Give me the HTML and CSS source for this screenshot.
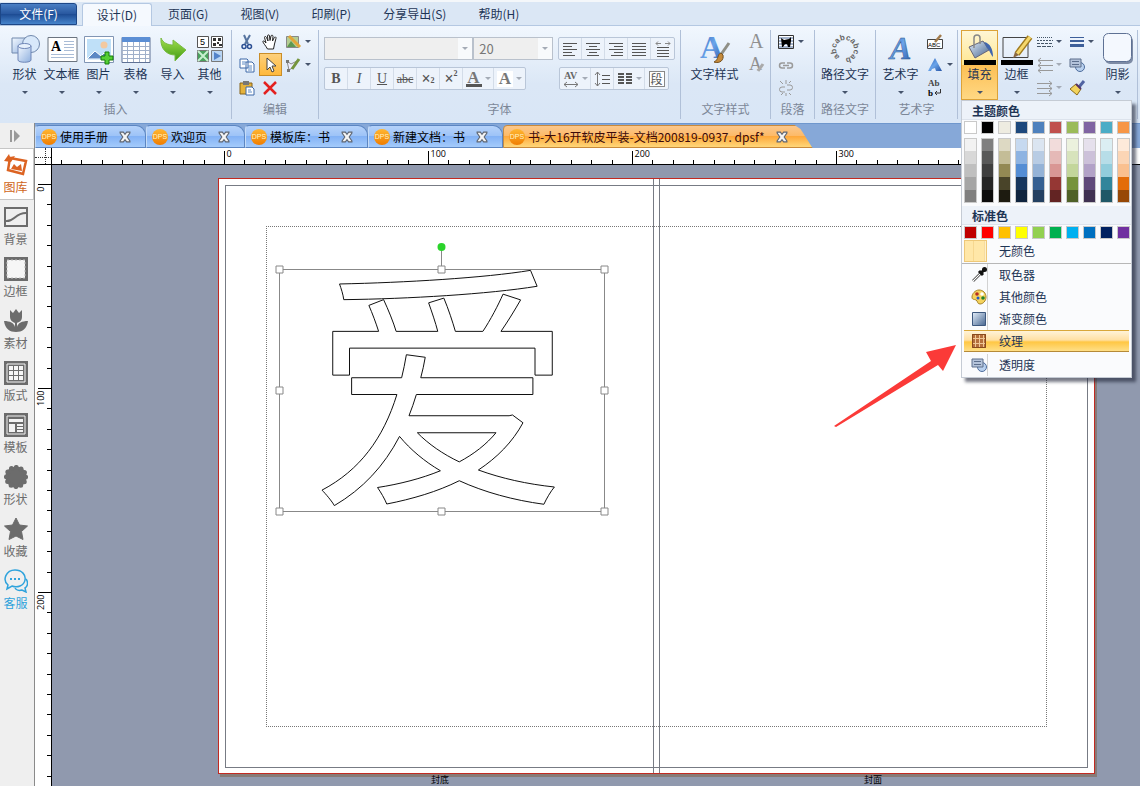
FILE: index.html
```html
<!DOCTYPE html>
<html lang="zh-CN">
<head>
    <meta charset="UTF-8">
    <meta name="viewport" content="width=device-width, initial-scale=1.0">
    <title>书-大16开软皮平装</title>
    <link rel="stylesheet" href="styles.css">
</head>
<body>
    <svg class="defs" aria-hidden="true">
        <defs>
            <linearGradient id="gBlue" x1="0" y1="0" x2="1" y2="1"><stop offset="0" stop-color="#f2f8ff"/><stop offset="1" stop-color="#8fb0de"/></linearGradient>
            <linearGradient id="gLetter" x1="0" y1="0" x2="1" y2="1"><stop offset="0" stop-color="#2a5db5"/><stop offset=".5" stop-color="#6ba5ea"/><stop offset="1" stop-color="#2553a5"/></linearGradient>
            <linearGradient id="gGreen" x1="0" y1="0" x2="0" y2="1"><stop offset="0" stop-color="#a4e04c"/><stop offset="1" stop-color="#3f9a14"/></linearGradient>
            <linearGradient id="gOrange" x1="0" y1="0" x2="0" y2="1"><stop offset="0" stop-color="#ffb733"/><stop offset="1" stop-color="#f07d00"/></linearGradient>
            <linearGradient id="gDark" x1="0" y1="0" x2="1" y2="1"><stop offset="0" stop-color="#e4effb"/><stop offset="1" stop-color="#46658f"/></linearGradient>
            <symbol id="dps" viewBox="0 0 16 16"><circle cx="8" cy="8" r="8" fill="url(#gOrange)"/><text x="8" y="10" text-anchor="middle" font-size="7" fill="#fff4c8" font-family="Liberation Sans">DPS</text></symbol>
            <symbol id="close" viewBox="0 0 11 11"><path d="M1 1h3l1.500 2L7 1h3v1L7.500 5.500 10 9v1H7L5.500 8 4 10H1V9l2.500-3.500L1 2z" fill="#f4f4f4" stroke="#5d6470"/></symbol>
            <symbol id="trans" viewBox="0 0 16 16"><circle cx="11" cy="10" r="4.500" fill="#b8d0ee" stroke="#4d6c9c"/><path d="M1 2h11v8H1z" fill="#b4c3da" stroke="#5c6e8c"/><path d="M3 4.500h7M3 7.500h7" stroke="#5c6e8c"/></symbol>
        </defs>
    </svg>

    <nav class="menubar">
        <button class="menu-file">文件(F)</button>
        <button class="menu-item active">设计(D)</button>
        <button class="menu-item">页面(G)</button>
        <button class="menu-item">视图(V)</button>
        <button class="menu-item">印刷(P)</button>
        <button class="menu-item">分享导出(S)</button>
        <button class="menu-item">帮助(H)</button>
    </nav>

    <header class="ribbon">
        <!-- 插入 -->
        <section class="group g-insert">
            <div class="group-body">
                <button class="big"><svg viewBox="0 0 32 32"><path d="M3 5h16v15H3z" fill="url(#gBlue)" stroke="#7189ad"/><circle cx="22" cy="11" r="8.500" fill="#d8e8fa" stroke="#7189ad"/><path d="M9 13v14c0 3 13 3 13 0V13z" fill="url(#gBlue)" stroke="#7087b8"/><ellipse cx="15.500" cy="13" rx="6.500" ry="2.500" fill="#e6f0fc" stroke="#7087b8"/></svg><span>形状</span><i class="caret"></i></button>
                <button class="big"><svg viewBox="0 0 32 32"><path d="M2 4.500h29v24H2z" fill="#fff" stroke="#6b7480"/><text x="5" y="18" font-size="14" font-weight="bold" font-family="Liberation Serif">A</text><path d="M18 8.500h10M18 11.500h10M18 14.500h10M18 17.500h10M5 21.500h23M5 24.500h23" stroke="#a9bcd6"/></svg><span>文本框</span><i class="caret"></i></button>
                <button class="big"><svg viewBox="0 0 32 32"><path d="M1.500 3.500h29v26h-29z" fill="#fff" stroke="#8195b4"/><path d="M4 6h24v21H4z" fill="#bfe0f8"/><circle cx="21" cy="12" r="3.500" fill="#f3c9a0"/><path d="M4 26l8-8 6 5 3-3 7 6z" fill="#5b88c4" stroke="#fff"/><path d="M22 19h4v4h4v4h-4v4h-4v-4h-4v-4h4z" fill="#55cf34" stroke="#177d0b"/></svg><span>图片</span><i class="caret"></i></button>
                <button class="big"><svg viewBox="0 0 32 32"><path d="M2 4.500h28v25H2z" fill="#fff" stroke="#5f7194"/><path d="M2 4h28v5H2z" fill="#5b8ed4"/><path d="M2 13.500h28M2 17.500h28M2 21.500h28M2 25.500h28M7.500 9v20M13.500 9v20M19.500 9v20M25.500 9v20" stroke="#a0b0ca"/></svg><span>表格</span><i class="caret"></i></button>
                <button class="big"><svg viewBox="0 0 32 32"><path d="M4 5c2 5 7 7 12 7V7l13 10-11 11v-6C10 22 3 16 4 5z" fill="url(#gGreen)" stroke="#79bb45"/></svg><span>导入</span><i class="caret"></i></button>
                <button class="big"><svg viewBox="0 0 32 32"><path d="M3.500 3.500h11v11h-11z" fill="#fff" stroke="#555"/><text x="6" y="12" font-size="9" font-family="Liberation Sans">5</text><path d="M17.500 3.500h11v11h-11z" fill="#fff" stroke="#555"/><path d="M19 5h3v3h-3zM24 5h3v3h-3zM19 10h3v3h-3zM23 9h2v2h-2zM25 11h3v2h-3z" fill="#333"/><path d="M3.500 17.500h11v11h-11z" fill="#4aa15d" stroke="#777"/><path d="M4 18l10 10M14 18L4 28" stroke="#c7efcf" stroke-width="2"/><path d="M17.500 17.500h11v11h-11z" fill="#b9d5f3" stroke="#777"/><path d="M20 19l7 4-7 4z" fill="#5383c9"/></svg><span>其他</span><i class="caret"></i></button>
            </div>
            <h2>插入</h2>
        </section>

        <!-- 编辑 -->
        <section class="group g-edit">
            <div class="group-body edit-grid">
                <button class="small" aria-label="剪切"><svg viewBox="0 0 16 16"><path d="M5 1l4 9M11 1L6 10" stroke="#56749f" stroke-width="2" fill="none"/><circle cx="5" cy="12.500" r="2" fill="none" stroke="#2b4f93" stroke-width="1.500"/><circle cx="10.500" cy="12.500" r="2" fill="none" stroke="#2b4f93" stroke-width="1.500"/></svg></button>
                <button class="small" aria-label="抓手"><svg viewBox="0 0 16 16"><path d="M5.500 15C4 12 1 9 .8 7.500 1 6.500 2.500 7 4 9L2.500 3.500c0-1.500 1.700-1 2 0L6 7l-.5-5c0-1.500 2-1.500 2 0L8 6.500 9 2c.3-1.300 2-1 2 .3L10.500 7l1.800-3.500c.7-1 2.200-.4 1.700.8L12.500 10 11.500 15z" fill="#fff" stroke="#222"/></svg></button>
                <button class="small" aria-label="裁剪"><svg viewBox="0 0 16 16"><path d="M1.500 2.500h12v11h-12z" fill="#b5cd93" stroke="#888"/><path d="M2 13l4-6 5 6z" fill="#5e9850"/><path d="M4 2l11 11" stroke="#e2a537" stroke-width="3"/></svg><i class="caret"></i></button>
                <button class="small" aria-label="复制"><svg viewBox="0 0 16 16"><path d="M1 2h7l1 1v8H1zM7 5h6l2 2v8H7z" fill="#fff" stroke="#3d69a8"/><path d="M3 5h4M3 7h3M9 9h4M9 11h4M9 13h4" stroke="#5f8cc6"/></svg></button>
                <button class="small pressed" aria-label="选择"><svg viewBox="0 0 16 16"><path d="M5 1v12l3-3 2 5 2-1-2-5h4z" fill="#fff" stroke="#444"/></svg></button>
                <button class="small" aria-label="节点"><svg viewBox="0 0 16 16"><path d="M2 4l2 9 5-3 5-7-8 4z" fill="#eef" stroke="#888"/><path d="M1 3h3v3H1zM2 12h3v3H2z" fill="#777"/><path d="M14 2L7 12" stroke="#75953d" stroke-width="3"/></svg><i class="caret"></i></button>
                <button class="small" aria-label="粘贴"><svg viewBox="0 0 16 16"><path d="M1 3h12v11H1z" fill="#e5b23b" stroke="#86621b"/><path d="M4 1h6v4H4z" fill="#777"/><path d="M7 7h6l2 2v6H7z" fill="#fff" stroke="#3d69a8"/><path d="M9 10h3M9 12h4" stroke="#5f8cc6"/></svg></button>
                <button class="small" aria-label="删除"><svg viewBox="0 0 16 16"><path d="M2 2l12 12M14 2L2 14" stroke="#e3201f" stroke-width="2.500"/></svg></button>
            </div>
            <h2>编辑</h2>
        </section>

        <!-- 字体 -->
        <section class="group g-font">
            <div class="group-body font-rows">
                <div class="font-row">
                    <span class="combo combo-font"><select aria-label="字体" disabled><option></option></select></span>
                    <span class="combo combo-size"><select aria-label="字号" disabled><option>20</option></select></span>
                    <div class="toolset push">
                        <button aria-label="左对齐"><svg viewBox="0 0 16 16"><path d="M1 2.500h14M1 5.500h9M1 8.500h14M1 11.500h9M1 14.500h12" stroke="#555"/></svg></button>
                        <button aria-label="居中"><svg viewBox="0 0 16 16"><path d="M1 2.500h14M4 5.500h8M1 8.500h14M4 11.500h8M2 14.500h12" stroke="#555"/></svg></button>
                        <button aria-label="右对齐"><svg viewBox="0 0 16 16"><path d="M1 2.500h14M6 5.500h9M1 8.500h14M6 11.500h9M3 14.500h12" stroke="#555"/></svg></button>
                        <button aria-label="两端对齐"><svg viewBox="0 0 16 16"><path d="M1 2.500h14M1 5.500h14M1 8.500h14M1 11.500h14M1 14.500h14" stroke="#555"/></svg></button>
                        <button aria-label="分散对齐"><svg viewBox="0 0 16 16"><path d="M2 6.500h12M2 9.500h12M2 12.500h12M2 15.500h12" stroke="#555"/><path d="M1 2.500h5M3 .5l-2 2 2 2M10 2.500h5M13 .5l2 2-2 2" stroke="#888" fill="none"/></svg></button>
                    </div>
                </div>
                <div class="font-row">
                    <div class="toolset fmt">
                        <button><b>B</b></button>
                        <button><em>I</em></button>
                        <button><u>U</u></button>
                        <button><s>abc</s></button>
                        <button class="script">×<small class="low">2</small></button>
                        <button class="script">×<small>2</small></button>
                        <button class="with-caret"><span class="fore">A</span><i class="caret dim"></i></button>
                        <button class="with-caret"><span class="back">A</span><i class="caret dim"></i></button>
                    </div>
                    <div class="toolset push2">
                        <button class="with-caret" aria-label="字距"><svg viewBox="0 0 16 16"><text x="1" y="8" font-size="10" font-weight="bold" fill="#666" font-family="Liberation Serif">AV</text><path d="M1 13.500h14M4 11l-3 2.500 3 2.500M12 11l3 2.500-3 2.500" stroke="#777" fill="none"/></svg><i class="caret dim"></i></button>
                        <button aria-label="行距"><svg viewBox="0 0 16 16"><path d="M3.500 1v14M1 4l2.500-3L6 4M1 12l2.500 3L6 12" stroke="#777" fill="none"/><path d="M8 4.500h8M8 8.500h8M8 12.500h8" stroke="#555"/></svg></button>
                        <button class="with-caret" aria-label="分栏"><svg viewBox="0 0 16 16"><path d="M1 3h6M1 6h6M1 9h6M1 12h6M9 3h6M9 6h6M9 9h6M9 12h6" stroke="#555" stroke-width="2"/></svg><i class="caret dim"></i></button>
                        <button><span class="para">段</span></button>
                    </div>
                </div>
            </div>
            <h2>字体</h2>
        </section>

        <section class="group g-style">
            <div class="group-body">
                <button class="big"><svg viewBox="0 0 32 32"><text x="1" y="25" font-size="32" font-weight="bold" fill="url(#gLetter)" font-family="Liberation Serif">A</text><path d="M30 10L21 23" stroke="#8f8f86" stroke-width="3"/><path d="M22 20c-4 1-2 7-7 9 6 2 10-2 9-7z" fill="#c58a3a" stroke="#77521f"/></svg><span>文字样式</span></button>
                <div class="stack">
                    <button class="small"><svg viewBox="0 0 16 16"><text x="1" y="14" font-size="20" fill="#909090" font-family="Liberation Serif">A</text></svg></button>
                    <button class="small"><svg viewBox="0 0 16 16"><text x="1" y="13" font-size="18" fill="#909090" font-family="Liberation Serif">A</text><path d="M15 7l-5 7" stroke="#aaa" stroke-width="3"/></svg></button>
                </div>
            </div>
            <h2>文字样式</h2>
        </section>

        <section class="group g-para">
            <div class="group-body stack">
                <button class="small" aria-label="环绕"><svg viewBox="0 0 16 16"><path d="M.5 1.500h15v13H.5z" fill="#fff" stroke="#333"/><path d="M1 4h14M1 7h14M1 10h14M1 13h14" stroke="#4b6b9c"/><path d="M3 4l3 2 5-1 2-2v4l-1 6h-2l-1-3H7l-2 3H4z"/></svg><i class="caret"></i></button>
                <button class="small" aria-label="链接"><svg viewBox="0 0 16 16"><path d="M7 6H4a2.500 2.500 0 000 5h3M9 6h3a2.500 2.500 0 010 5H9M5 8.500h6" stroke="#9a9a9a" stroke-width="1.500" fill="none"/></svg></button>
                <button class="small" aria-label="取消链接"><svg viewBox="0 0 16 16"><path d="M7 7H4a2.500 2.500 0 000 5h3M9 5h3a2.500 2.500 0 010 5H9M2 1l3 3M8 0v4M13 1l-2 2M3 15l2-2M8 16v-3M13 15l-2-2" stroke="#9a9a9a" fill="none"/></svg></button>
            </div>
            <h2>段落</h2>
        </section>

        <section class="group g-path">
            <div class="group-body">
                <button class="big"><svg viewBox="0 0 32 32"><path id="ring" d="M11 23.500A9 9 0 1 1 21 23.500A9 9 0 0 1 11 23.500" fill="none"/><text font-size="8" font-weight="bold" fill="#666" font-family="Liberation Sans"><textPath href="#ring">abcabcabcab</textPath></text></svg><span>路径文字</span><i class="caret"></i></button>
            </div>
            <h2>路径文字</h2>
        </section>

        <section class="group g-art">
            <div class="group-body">
                <button class="big"><svg viewBox="0 0 32 32"><text x="5" y="26" font-size="32" font-style="italic" font-weight="bold" fill="url(#gLetter)" stroke="#2c5487" stroke-width=".5" font-family="Liberation Serif">A</text></svg><span>艺术字</span><i class="caret"></i></button>
                <div class="stack">
                    <button class="small"><svg viewBox="0 0 16 16"><path d="M.5 5.500h15v9H.5z" fill="#fff" stroke="#444"/><text x="1" y="13" font-size="6" font-family="Liberation Sans">ABC</text><path d="M14 1L8 8" stroke="#a27b4c" stroke-width="2.500"/></svg></button>
                    <button class="small"><svg viewBox="0 0 16 16"><path d="M8 1l7 13H9l-1-3-3 1-1 2H1z" fill="url(#gLetter)"/></svg><i class="caret"></i></button>
                    <button class="small"><svg viewBox="0 0 16 16"><text x="1" y="6" font-size="9" fill="#444" font-family="Liberation Serif" font-weight="bold">Ab</text><text x="1" y="16" font-size="9" font-family="Liberation Serif" font-weight="bold">b</text><path d="M13.500 9v4H8M10 11l-2 2 2 2" stroke="#333" fill="none"/></svg></button>
                </div>
            </div>
            <h2>艺术字</h2>
        </section>

        <section class="group g-fill">
            <div class="group-body">
                <div class="dropdown">
                    <button class="big open" aria-expanded="true"><svg viewBox="0 0 32 32"><path d="M5 14L19 8l6 9-14 8z" fill="url(#gDark)" stroke="#667"/><path d="M10 15V5c0-4 6-4 6 0v6" fill="none" stroke="#888" stroke-width="1.500"/><path d="M20 9c6 1 9 7 9 15-3-3-3-7-6-9z" fill="#4166ad"/><path d="M0 27h32v5H0z"/></svg><span>填充</span><i class="caret"></i></button>
                    <div class="menu">
                        <h3>主题颜色</h3>
                        <div class="swatches" id="themeColors"></div>
                        <div class="swatches shades" id="themeShades"></div>
                        <h3>标准色</h3>
                        <div class="swatches" id="standardColors"></div>
                        <ul>
                            <li class="rule"><button><span class="gutter nofill"></span>无颜色</button></li>
                            <li><button><span class="gutter"><svg viewBox="0 0 16 16"><path d="M2 14l8-8" stroke="#777" stroke-width="3"/><path d="M2 14l8-8" stroke="#fff"/><path d="M8 4l4 4M10 6l3-3" stroke="#111" stroke-width="3"/><circle cx="13.500" cy="2.500" r="2.500" fill="#111"/></svg></span>取色器</button></li>
                            <li><button><span class="gutter"><svg viewBox="0 0 16 16"><path d="M8 1c4 0 7 3 7 7s-3 7-6 7-2-3-4-4-4 0-4-3 3-7 7-7z" fill="#f5d35d" stroke="#a68328"/><circle cx="6" cy="5" r="1.800" fill="#b62e20"/><circle cx="11" cy="5" r="1.800" fill="#fff"/><circle cx="12" cy="9" r="1.800" fill="#21812c"/><circle cx="7" cy="9" r="1.500" fill="#235bc2"/></svg></span>其他颜色</button></li>
                            <li><button><span class="gutter"><svg viewBox="0 0 16 16"><path d="M1.500 1.500h13v13h-13z" fill="url(#gDark)" stroke="#3d587e"/></svg></span>渐变颜色</button></li>
                            <li class="hot"><button><span class="gutter"><svg viewBox="0 0 16 16"><path d="M1 1h14v14H1z" fill="#b56f3c"/><path d="M4.500 1v14M8.500 1v14M12.500 1v14M1 5.500h14M1 10.500h14" stroke="#efc796"/><path d="M1.500 1.500h13v13h-13z" fill="none" stroke="#87491f"/></svg></span>纹理</button></li>
                            <li class="last"><button><span class="gutter"><svg><use href="#trans"/></svg></span>透明度</button></li>
                        </ul>
                    </div>
                </div>
                <button class="big"><svg viewBox="0 0 32 32"><path d="M2 4.500h25v20H2z" fill="none" stroke="#444"/><path d="M29 4L16 21" stroke="#a17b1e" stroke-width="6"/><path d="M29 4L16 21" stroke="#f5d76b" stroke-width="3"/><path d="M18 22l-6 3 2-6z" fill="#8b6a43"/><path d="M0 27h32v5H0z"/></svg><span>边框</span><i class="caret"></i></button>
                <div class="stack">
                    <button class="small"><svg viewBox="0 0 16 16"><path d="M0 3.500h16" stroke="#456" stroke-dasharray="1 1"/><path d="M0 6.500h16" stroke="#456" stroke-dasharray="2 1"/><path d="M0 9.500h16" stroke="#456" stroke-dasharray="3 1"/><path d="M0 12.500h16" stroke="#456" stroke-dasharray="4 1"/></svg><i class="caret"></i></button>
                    <button class="small"><svg viewBox="0 0 16 16"><path d="M1 3.500h15M1 8.500h15M1 13.500h15M4 1L1 3.500 4 6M4 6L1 8.500 4 11M4 11l-3 2.500L4 16" stroke="#999" fill="none"/></svg><i class="caret dim"></i></button>
                    <button class="small"><svg viewBox="0 0 16 16"><path d="M0 3.500h15M0 8.500h15M0 13.500h15M12 1l3 2.500L12 6M12 6l3 2.500-3 2.500M12 11l3 2.500-3 2.500" stroke="#999" fill="none"/></svg><i class="caret dim"></i></button>
                </div>
                <div class="stack">
                    <button class="small"><svg viewBox="0 0 16 16"><path d="M1 3.500h14" stroke="#3d5f9a"/><path d="M1 7h14" stroke="#3d5f9a" stroke-width="2"/><path d="M1 11.500h14" stroke="#3d5f9a" stroke-width="3"/></svg><i class="caret"></i></button>
                    <button class="small"><svg><use href="#trans"/></svg></button>
                    <button class="small"><svg viewBox="0 0 16 16"><path d="M15 1l-5 6" stroke="#5163a1" stroke-width="3"/><path d="M7 4l5 5-4 6-7-6z" fill="#f2d35c" stroke="#8b6b18"/><path d="M7 4l5 5" stroke="#536" stroke-width="2"/></svg></button>
                </div>
                <button class="big"><svg viewBox="0 0 32 32"><rect x="3" y="3" width="28" height="28" rx="5" fill="#7d8ba5"/><rect x="1.500" y=".5" width="28" height="28" rx="5" fill="#f4f8fe" stroke="#5e7194"/></svg><span>阴影</span><i class="caret"></i></button>
            </div>
            <h2></h2>
        </section>
    </header>

    <main class="workspace">
        <aside class="sidebar">
            <button class="collapse" aria-label="展开"><svg viewBox="0 0 12 14"><path d="M1 1h2v12H1zM5 1l6 6-6 6z" fill="#999"/></svg></button>
            <button class="side-item current"><svg viewBox="0 0 24 24"><path d="M6 5l16 3-3 13-15-4z" fill="none" stroke="#dc6322" stroke-width="2.500"/><path d="M0 8l5-7 1 3 5-1-4 6z" fill="#dc6322"/><path d="M7 16l3-5 3 3 4-3 1 7z" fill="#dc6322"/></svg>图库</button>
            <button class="side-item"><svg viewBox="0 0 24 24"><path d="M1 3h22v18H1z" fill="none" stroke="#6c6c6c" stroke-width="2"/><path d="M2 16c8 1 9-8 20-8" fill="none" stroke="#6c6c6c" stroke-width="2"/></svg>背景</button>
            <button class="side-item"><svg viewBox="0 0 24 24"><path d="M1.500 1.500h21v21h-21z" fill="#f6f6f6" stroke="#6c6c6c" stroke-width="3"/><path d="M3 3h18v18H3z" fill="none" stroke="#bbb" stroke-dasharray="2 2"/></svg>边框</button>
            <button class="side-item"><svg viewBox="0 0 24 24"><path d="M6 1l3 3 3-4 3 4 3-3v7c0 4-3 5-5 6v4c1-4 5-6 11-6-1 8-6 11-12 11S1 20 0 12c6 0 10 2 11 6v-4c-3-1-5-3-5-6z" fill="#6c6c6c"/></svg>素材</button>
            <button class="side-item"><svg viewBox="0 0 24 24"><path d="M1 1h22v22H1z" fill="#6c6c6c" stroke="#6c6c6c" stroke-width="2"/><path d="M3 3h18v18H3z" fill="none" stroke="#f6f6f6"/><path d="M5 5h4v4H5zM10 5h4v4h-4zM15 5h4v4h-4zM5 10h4v4H5zM10 10h4v4h-4zM15 10h4v4h-4zM5 15h4v4H5zM10 15h4v4h-4zM15 15h4v4h-4z" fill="#f6f6f6"/></svg>版式</button>
            <button class="side-item"><svg viewBox="0 0 24 24"><path d="M0 0h24v24H0z" fill="#6c6c6c"/><path d="M3 3h18v18H3z" fill="none" stroke="#f3f3f3"/><path d="M5 6h14v3H5zM5 11h6v8H5zM13 11h6v2h-6zM13 14h6v2h-6zM13 17h6v2h-6z" fill="#f3f3f3"/></svg>模板</button>
            <button class="side-item"><svg viewBox="0 0 24 24"><circle cx="12" cy="12" r="10.500" fill="#6c6c6c"/><circle cx="12" cy="12" r="9.549" fill="none" stroke="#6c6c6c" stroke-width="5" stroke-dasharray="0 5" stroke-linecap="round"/></svg>形状</button>
            <button class="side-item"><svg viewBox="0 0 24 24"><path d="M12 1l3.500 7 8 1-6 5.500 1.500 8L12 19l-7 3.500 1.500-8L.5 9l8-1z" fill="#6c6c6c" stroke="#6c6c6c" stroke-linejoin="round"/></svg>收藏</button>
            <button class="side-item service"><svg viewBox="0 0 24 24"><path d="M3 20l1-4C-2 11 2 1 11 1c7 0 11 5 10 10-1 6-8 8-13 6z" fill="none" stroke="#2fa3dc" stroke-width="1.500"/><path d="M22 10c3 4 1 8-1 9l1 4-4-2c-3 1-6 0-7-2" fill="none" stroke="#2fa3dc" stroke-width="1.500"/><path d="M6 9h2v2H6zM10 9h2v2h-2zM14 9h2v2h-2z" fill="#2fa3dc"/></svg>客服</button>
        </aside>

        <div class="editor">
            <div class="tabs">
                <div class="tab"><svg class="logo"><use href="#dps"/></svg>使用手册<button aria-label="关闭"><svg><use href="#close"/></svg></button></div>
                <div class="tab"><svg class="logo"><use href="#dps"/></svg>欢迎页<button aria-label="关闭"><svg><use href="#close"/></svg></button></div>
                <div class="tab"><svg class="logo"><use href="#dps"/></svg>模板库：书<button aria-label="关闭"><svg><use href="#close"/></svg></button></div>
                <div class="tab"><svg class="logo"><use href="#dps"/></svg>新建文档：书<button aria-label="关闭"><svg><use href="#close"/></svg></button></div>
                <div class="tab active"><svg class="logo"><use href="#dps"/></svg>书-大16开软皮平装-文档200819-0937. dpsf*<button aria-label="关闭"><svg><use href="#close"/></svg></button></div>
            </div>
            <div class="ruler-row">
                <div class="corner"></div>
                <svg class="ruler-h" id="rulerH"></svg>
            </div>
            <div class="canvas-row">
                <svg class="ruler-v" id="rulerV"></svg>
                <div class="canvas">
                    <div class="sheet">
                        <div class="trim"></div>
                        <div class="margin"></div>
                        <div class="spine"></div>
                        <!-- 选中的艺术字 -->
                        <svg class="artwork" viewBox="0 0 336 274">
                            <path d="M5.500 27.500h325v242h-325zM167.500 27V6" fill="none" stroke="#888"/>
                            <text class="glyph" x="168" y="245" text-anchor="middle">爱</text>
                            <circle cx="167.500" cy="5" r="4" fill="#2bd42b"/>
                            <path d="M2 24h7v7H2zM164 24h7v7h-7zM327 24h7v7h-7zM2 145h7v7H2zM327 145h7v7h-7zM2 266h7v7H2zM164 266h7v7h-7zM327 266h7v7h-7z" fill="#fff" stroke="#888"/>
                        </svg>
                        <span class="cover back-cover">封底</span>
                        <span class="cover front-cover">封面</span>
                    </div>
                    <svg class="pointer" viewBox="0 0 124 84"><path d="M0 82L97 17 92 8 122 1 109 27 104 21 2 83z" fill="#fb3a38"/></svg>
                </div>
            </div>
        </div>
    </main>

    <script src="script.js"></script>
</body>
</html>
```
FILE: styles.css
```css
* {
    box-sizing: border-box;
    margin: 0;
    padding: 0;
}

body {
    display: flex;
    flex-direction: column;
    min-height: 100vh;
    overflow: hidden;
    background: #dbe7f5;
    color: #1e3555;
    font-family: "Noto Sans CJK SC", "Open Sans", sans-serif;
    font-size: 12px;
    line-height: 16px;
}

button {
    border: none;
    background: none;
    color: inherit;
    font: inherit;
    white-space: nowrap;
}

svg {
    display: block;
    flex: none;
}

.defs {
    position: absolute;
    width: 0;
    height: 0;
}

/* menu bar */
.menubar {
    display: flex;
    height: 26px;
    padding-top: 3px;
    background: #dbe7f5;
    border-bottom: 1px solid #b4c8e2;
    box-shadow: inset 0 2px 0 #f4f7fa;
}

.menu-file {
    width: 77px;
    margin-right: 5px;
    border: 1px solid #1d4787;
    border-radius: 0 3px 0 0;
    background: linear-gradient(#4a7fc4, #28579f 50%, #1c4a92 50%, #4684cb);
    color: #fff;
}

.menu-item {
    padding: 0 16px;
}

.menu-item.active {
    height: 23px;
    width: 70px;
    padding: 0;
    border: 1px solid #b4c8e2;
    border-bottom: none;
    border-radius: 3px 3px 0 0;
    background: #f5f9fe;
}

/* ribbon */
.ribbon {
    display: flex;
    height: 97px;
    padding-top: 4px;
    background: linear-gradient(#f1f7fe, #dbe7f6 60%, #d9e6f6);
}

.group {
    flex: none;
    position: relative;
    height: 89px;
    border-right: 1px solid #b0c0d8;
}

.group-body {
    display: flex;
    justify-content: center;
    height: 71px;
}

.group h2 {
    height: 16px;
    color: #7c8798;
    font-size: 12px;
    font-weight: normal;
    text-align: center;
}

.g-insert { width: 232px; }
.g-edit { width: 87px; }
.g-font { width: 362px; }
.g-style { width: 90px; }
.g-para { width: 44px; }
.g-path { width: 61px; }
.g-art { width: 82px; }
.g-fill { width: 180px; }

.g-insert .group-body {
    justify-content: flex-start;
    padding-left: 6px;
}

.g-fill .group-body {
    justify-content: flex-start;
    padding-left: 3px;
}

.caret {
    flex: none;
    border: 3px solid transparent;
    border-top: 3px solid #46546c;
    border-bottom: none;
}

.caret.dim {
    border-top-color: #a4abb6;
}

.big {
    display: flex;
    flex-direction: column;
    align-items: center;
    min-width: 37px;
    height: 70px;
    padding-top: 3px;
}

.big svg {
    width: 32px;
    height: 32px;
    margin-bottom: 1px;
    overflow: visible;
}

.big .caret {
    margin-top: 9px;
}

.big.open {
    border: 1px solid #dca238;
    padding-top: 2px;
    background: linear-gradient(#fff6d5, #ffe790 50%, #fcbf55 50%, #ffd883);
}

.small {
    display: flex;
    align-items: center;
    gap: 4px;
    height: 23px;
    padding: 0 3px;
}

.small svg {
    width: 16px;
    height: 16px;
    overflow: visible;
}

.small.pressed {
    border: 1px solid #c98d28;
    padding: 0 2px;
    background: linear-gradient(#fdd07c, #ffb93c);
}

.stack {
    display: flex;
    flex-direction: column;
    justify-content: flex-start;
}

.stack.group-body {
    padding-left: 4px;
}

.edit-grid {
    display: grid;
    grid-template-columns: 23px 23px 32px;
    grid-template-rows: repeat(3, 23px);
}

/* font group */
.font-rows {
    flex-direction: column;
    justify-content: flex-start;
    gap: 7px;
    padding: 7px 5px 0;
}

.font-row {
    display: flex;
    height: 23px;
}

.combo {
    position: relative;
    height: 23px;
    border: 1px solid #b9c1cc;
    background: #efefef;
}

.combo::after {
    content: '';
    position: absolute;
    top: 9px;
    right: 4px;
    border: 3px solid transparent;
    border-top-color: #a4abb6;
    border-bottom: none;
}

.combo-font { width: 150px; }
.combo-size { width: 80px; }

.combo select {
    appearance: none;
    width: 100%;
    height: 21px;
    padding: 0 5px;
    border: none;
    border-right: 14px solid #f8fafc;
    background: none;
    color: #777;
    font: inherit;
    font-size: 13px;
    opacity: 1;
}

.toolset {
    display: flex;
    height: 23px;
    border: 1px solid #b9c6d8;
    border-radius: 2px;
    background: #edf3fb;
    color: #555;
}

.toolset button {
    display: flex;
    align-items: center;
    justify-content: center;
    gap: 3px;
    width: 23px;
    border-right: 1px solid #d3dce8;
}

.toolset button:last-child {
    border-right: none;
}

.toolset svg {
    width: 16px;
    height: 16px;
    overflow: visible;
}

.toolset .with-caret {
    width: 31px;
}

.push { margin-left: 5px; }
.push2 { margin-left: 33px; }

.fmt {
    font-family: "Liberation Serif", serif;
    font-size: 14px;
}

.fmt s {
    font-size: 12px;
}

.toolset .script {
    gap: 0;
    font-size: 16px;
    font-weight: bold;
}

.script small {
    align-self: flex-start;
    padding-top: 2px;
    font-size: 8px;
    line-height: 8px;
}

.script .low {
    align-self: flex-end;
    padding: 0 0 4px;
}

.fore,
.back {
    width: 16px;
    height: 16px;
    font-size: 17px;
    font-weight: bold;
    line-height: 14px;
    color: #777;
}

.fore {
    border-bottom: 3px solid #555;
}

.back {
    background: #fff;
    line-height: 16px;
}

.para {
    width: 16px;
    height: 16px;
    border: 1px solid #888;
    background: #fff;
    line-height: 14px;
}

.g-style .big { width: 60px; }
.g-style .stack { width: 22px; }
.g-art .big { width: 46px; }
.g-art .stack { width: 32px; }
.g-fill .stack { width: 32px; }
.g-fill .stack .small { gap: 3px; padding: 0 2px; }

/* fill drop-down */
.dropdown {
    position: relative;
}

.menu {
    position: absolute;
    z-index: 10;
    top: 70px;
    left: 0;
    width: 171px;
    border: 1px solid #c5cbd4;
    background: #fafbfd;
    box-shadow: 4px 4px 3px rgba(30, 35, 55, 0.6);
}

.menu h3 {
    height: 19px;
    padding-left: 10px;
    background: #edf2f9;
    border-bottom: 1px solid #dde3ec;
    font-size: 12px;
    line-height: 19px;
}

.swatches {
    display: flex;
    gap: 4px;
    padding: 1px 0 4px 2px;
}

.swatch {
    flex: none;
    width: 13px;
    height: 13px;
    border: 1px solid #c9c9c9;
}

.shades {
    padding-top: 0;
    padding-bottom: 3px;
}

.shades .swatch {
    height: 65px;
}

.shade {
    display: block;
    height: 13px;
}

.shade:first-child,
.shade:last-child {
    height: 12px;
}

#standardColors {
    padding-bottom: 1px;
}

.menu ul {
    list-style: none;
}

.menu li {
    height: 22px;
    padding: 0 2px;
}

.menu li button {
    display: flex;
    align-items: center;
    width: 100%;
    height: 22px;
    text-align: left;
}

.menu li.rule {
    height: 24px;
    border-bottom: 1px solid #b7b7b7;
}

.menu li.hot button {
    border-top: 1px solid #d9a739;
    border-bottom: 1px solid #b58a38;
    background: linear-gradient(#fff3d8, #ffe0a3 45%, #ffc744 55%, #ffdf87);
}

.menu li.last {
    height: 25px;
    padding-top: 2px;
}

.gutter {
    display: flex;
    align-items: center;
    justify-content: flex-end;
    width: 24px;
    height: 22px;
    margin-right: 11px;
    border-right: 1px solid #d2d2d2;
}

.hot .gutter {
    border-right-color: transparent;
}

.gutter svg {
    width: 16px;
    height: 16px;
}

.gutter.nofill {
    width: 23px;
    margin-right: 12px;
    border: 1px solid #eec878;
    background: linear-gradient(90deg, #ffe7a8 8px, #eec878 8px, #ffe7a8 9px, #ffe7a8 19px, #eec878 19px, #fff0c8 20px);
}

/* workspace */
.workspace {
    display: flex;
    flex: 1;
}

.sidebar {
    flex: none;
    width: 35px;
    background: #efefef;
    border-right: 1px solid #8a8a8a;
}

.collapse {
    display: flex;
    align-items: center;
    justify-content: center;
    width: 100%;
    height: 25px;
    padding-right: 4px;
}

.collapse svg {
    width: 12px;
    height: 14px;
}

.side-item {
    display: flex;
    flex-direction: column;
    align-items: center;
    gap: 2px;
    width: 100%;
    height: 52px;
    padding: 5px 3px 0 0;
    color: #6c6c6c;
}

.side-item svg {
    width: 24px;
    height: 24px;
}

.side-item.current {
    border: 1px solid #c6c6c6;
    border-left: none;
    padding: 4px 2px 0 0;
    background: #fff;
    color: #cf6420;
}

.side-item.service {
    color: #2fa3dc;
}

.editor {
    display: flex;
    flex: 1;
    flex-direction: column;
    min-width: 0;
}

.tabs {
    display: flex;
    height: 25px;
    padding-top: 1px;
    background: #86a8d8;
    border-top: 1px solid #6f97cd;
}

.tab {
    display: flex;
    align-items: center;
    padding: 0 14px 0 5px;
    border: 1px solid #5c86c2;
    border-left-color: #c5dcf8;
    border-radius: 4px 10px 0 0;
    background: linear-gradient(#b5d2fa, #9cc2f7 50%, #83b2f5 50%, #a4cbfb);
    color: #000;
    white-space: nowrap;
}

.tab .logo {
    width: 16px;
    height: 16px;
    margin-right: 3px;
}

.tab button {
    margin-left: 11px;
}

.tab button svg {
    width: 12px;
    height: 12px;
}

.tab.active {
    padding-right: 24px;
    border-color: #c98a3b;
    background: linear-gradient(#fbc78c, #fdb965 50%, #fea93c 50%, #ffd77a);
    clip-path: polygon(0 0, calc(100% - 18px) 0, calc(100% - 12px) 4px, 100% 100%, 0 100%);
    color: #3c0a0a;
}

.ruler-row,
.canvas-row {
    display: flex;
}

.canvas-row {
    flex: 1;
}

.corner {
    position: relative;
    flex: none;
    width: 17px;
    height: 17px;
    border-right: 1px solid #000;
    border-bottom: 1px solid #000;
    background: #fff;
}

.corner::before,
.corner::after {
    content: '';
    position: absolute;
}

.corner::before {
    top: 9px;
    width: 16px;
    border-top: 1px dotted #333;
}

.corner::after {
    left: 10px;
    height: 16px;
    border-left: 1px dotted #333;
}

.ruler-h {
    flex: 1;
    min-width: 0;
    height: 17px;
    border-bottom: 1px solid #000;
    background: #fff;
}

.ruler-v {
    width: 17px;
    height: auto;
    border-right: 1px solid #000;
    background: #fff;
}

.ruler-h text,
.ruler-v text {
    font-family: "Open Sans", sans-serif;
    font-size: 9px;
}

/* canvas */
.canvas {
    position: relative;
    flex: 1;
    overflow: hidden;
    background: #9099ae;
}

.sheet {
    position: absolute;
    top: 13px;
    left: 166px;
    width: 877px;
    height: 596px;
    border: 1px solid #c22a22;
    background: #fff;
    box-shadow: 2px 3px 0 #877b78;
}

.trim,
.margin,
.spine,
.artwork,
.cover {
    position: absolute;
}

.trim {
    inset: 6px 6px 5px;
    border: 1px solid #777b84;
}

.margin {
    inset: 47px 47px 46px;
    border: 1px dotted #777;
}

.spine {
    top: 0;
    bottom: 0;
    left: 434px;
    width: 7px;
    border: solid #777b84;
    border-width: 0 1px;
}

.artwork {
    top: 63px;
    left: 55px;
    width: 336px;
    height: 274px;
    overflow: visible;
}

.glyph {
    font-family: "Noto Sans CJK SC", sans-serif;
    font-size: 262px;
    fill: none;
    stroke: #111;
    stroke-width: 1px;
}

.cover {
    top: 595px;
    color: #000;
    font-size: 9px;
    line-height: 12px;
}

.back-cover { left: 212px; }
.front-cover { left: 645px; }

.pointer {
    position: absolute;
    top: 179px;
    left: 782px;
    width: 124px;
    height: 84px;
}
```
FILE: script.js
```js
const SVG_NS = 'http://www.w3.org/2000/svg';

const theme = [
    ['#ffffff', '#f2f2f2', '#d8d8d8', '#bfbfbf', '#a5a5a5', '#7f7f7f'],
    ['#000000', '#7f7f7f', '#595959', '#3f3f3f', '#262626', '#0c0c0c'],
    ['#eeece1', '#ddd9c3', '#c4bd97', '#938953', '#494429', '#1d1b10'],
    ['#1f497d', '#c6d9f0', '#8db3e2', '#548dd4', '#17365d', '#0f243e'],
    ['#4f81bd', '#dbe5f1', '#b8cce4', '#95b3d7', '#366092', '#244061'],
    ['#c0504d', '#f2dcdb', '#e5b9b7', '#d99694', '#953734', '#632423'],
    ['#9bbb59', '#ebf1dd', '#d7e3bc', '#c3d69b', '#76923c', '#4f6128'],
    ['#8064a2', '#e5e0ec', '#ccc1d9', '#b2a2c7', '#5f497a', '#3f3151'],
    ['#4bacc6', '#dbeef3', '#b7dde8', '#92cddc', '#31859b', '#205867'],
    ['#f79646', '#fdeada', '#fbd5b5', '#fac08f', '#e36c09', '#974806']
];
const standard = ['#c00000', '#ff0000', '#ffc000', '#ffff00', '#92d050', '#00b050', '#00b0f0', '#0070c0', '#002060', '#7030a0'];

function addSwatch(parent, color) {
    const swatch = document.createElement('button');
    swatch.className = 'swatch';
    swatch.setAttribute('aria-label', color);
    swatch.style.background = color;
    parent.appendChild(swatch);
}

theme.forEach(column => {
    addSwatch(document.getElementById('themeColors'), column[0]);
    const strip = document.createElement('div');
    strip.className = 'swatch';
    column.slice(1).forEach(color => {
        const shade = document.createElement('span');
        shade.className = 'shade';
        shade.style.background = color;
        strip.appendChild(shade);
    });
    document.getElementById('themeShades').appendChild(strip);
});
standard.forEach(color => addSwatch(document.getElementById('standardColors'), color));

// 标尺：每 10mm 一小格，每 100mm 一个数字
const STEP = 20.4;

function drawRuler(svg, origin, vertical) {
    const box = svg.getBoundingClientRect();
    const length = vertical ? box.height : box.width;
    const first = Math.ceil(-origin / STEP);
    const last = Math.floor((length - origin) / STEP);
    let d = '';
    for (let i = first; i <= last; i++) {
        const pos = Math.round(origin + i * STEP) + 0.5;
        const major = i % 10 === 0;
        const from = major ? 3 : 12;
        d += vertical ? `M${from} ${pos}H16` : `M${pos} ${from}V16`;
        if (major) {
            const label = document.createElementNS(SVG_NS, 'text');
            label.textContent = Math.abs(i * 10);
            if (vertical) {
                label.setAttribute('transform', `translate(9 ${pos + 2}) rotate(-90)`);
                label.setAttribute('text-anchor', 'end');
            } else {
                label.setAttribute('x', pos + 2);
                label.setAttribute('y', 9);
            }
            svg.appendChild(label);
        }
    }
    const ticks = document.createElementNS(SVG_NS, 'path');
    ticks.setAttribute('d', d);
    ticks.setAttribute('stroke', '#000');
    svg.appendChild(ticks);
}

drawRuler(document.getElementById('rulerH'), 172, false);
drawRuler(document.getElementById('rulerV'), 19, true);
```
